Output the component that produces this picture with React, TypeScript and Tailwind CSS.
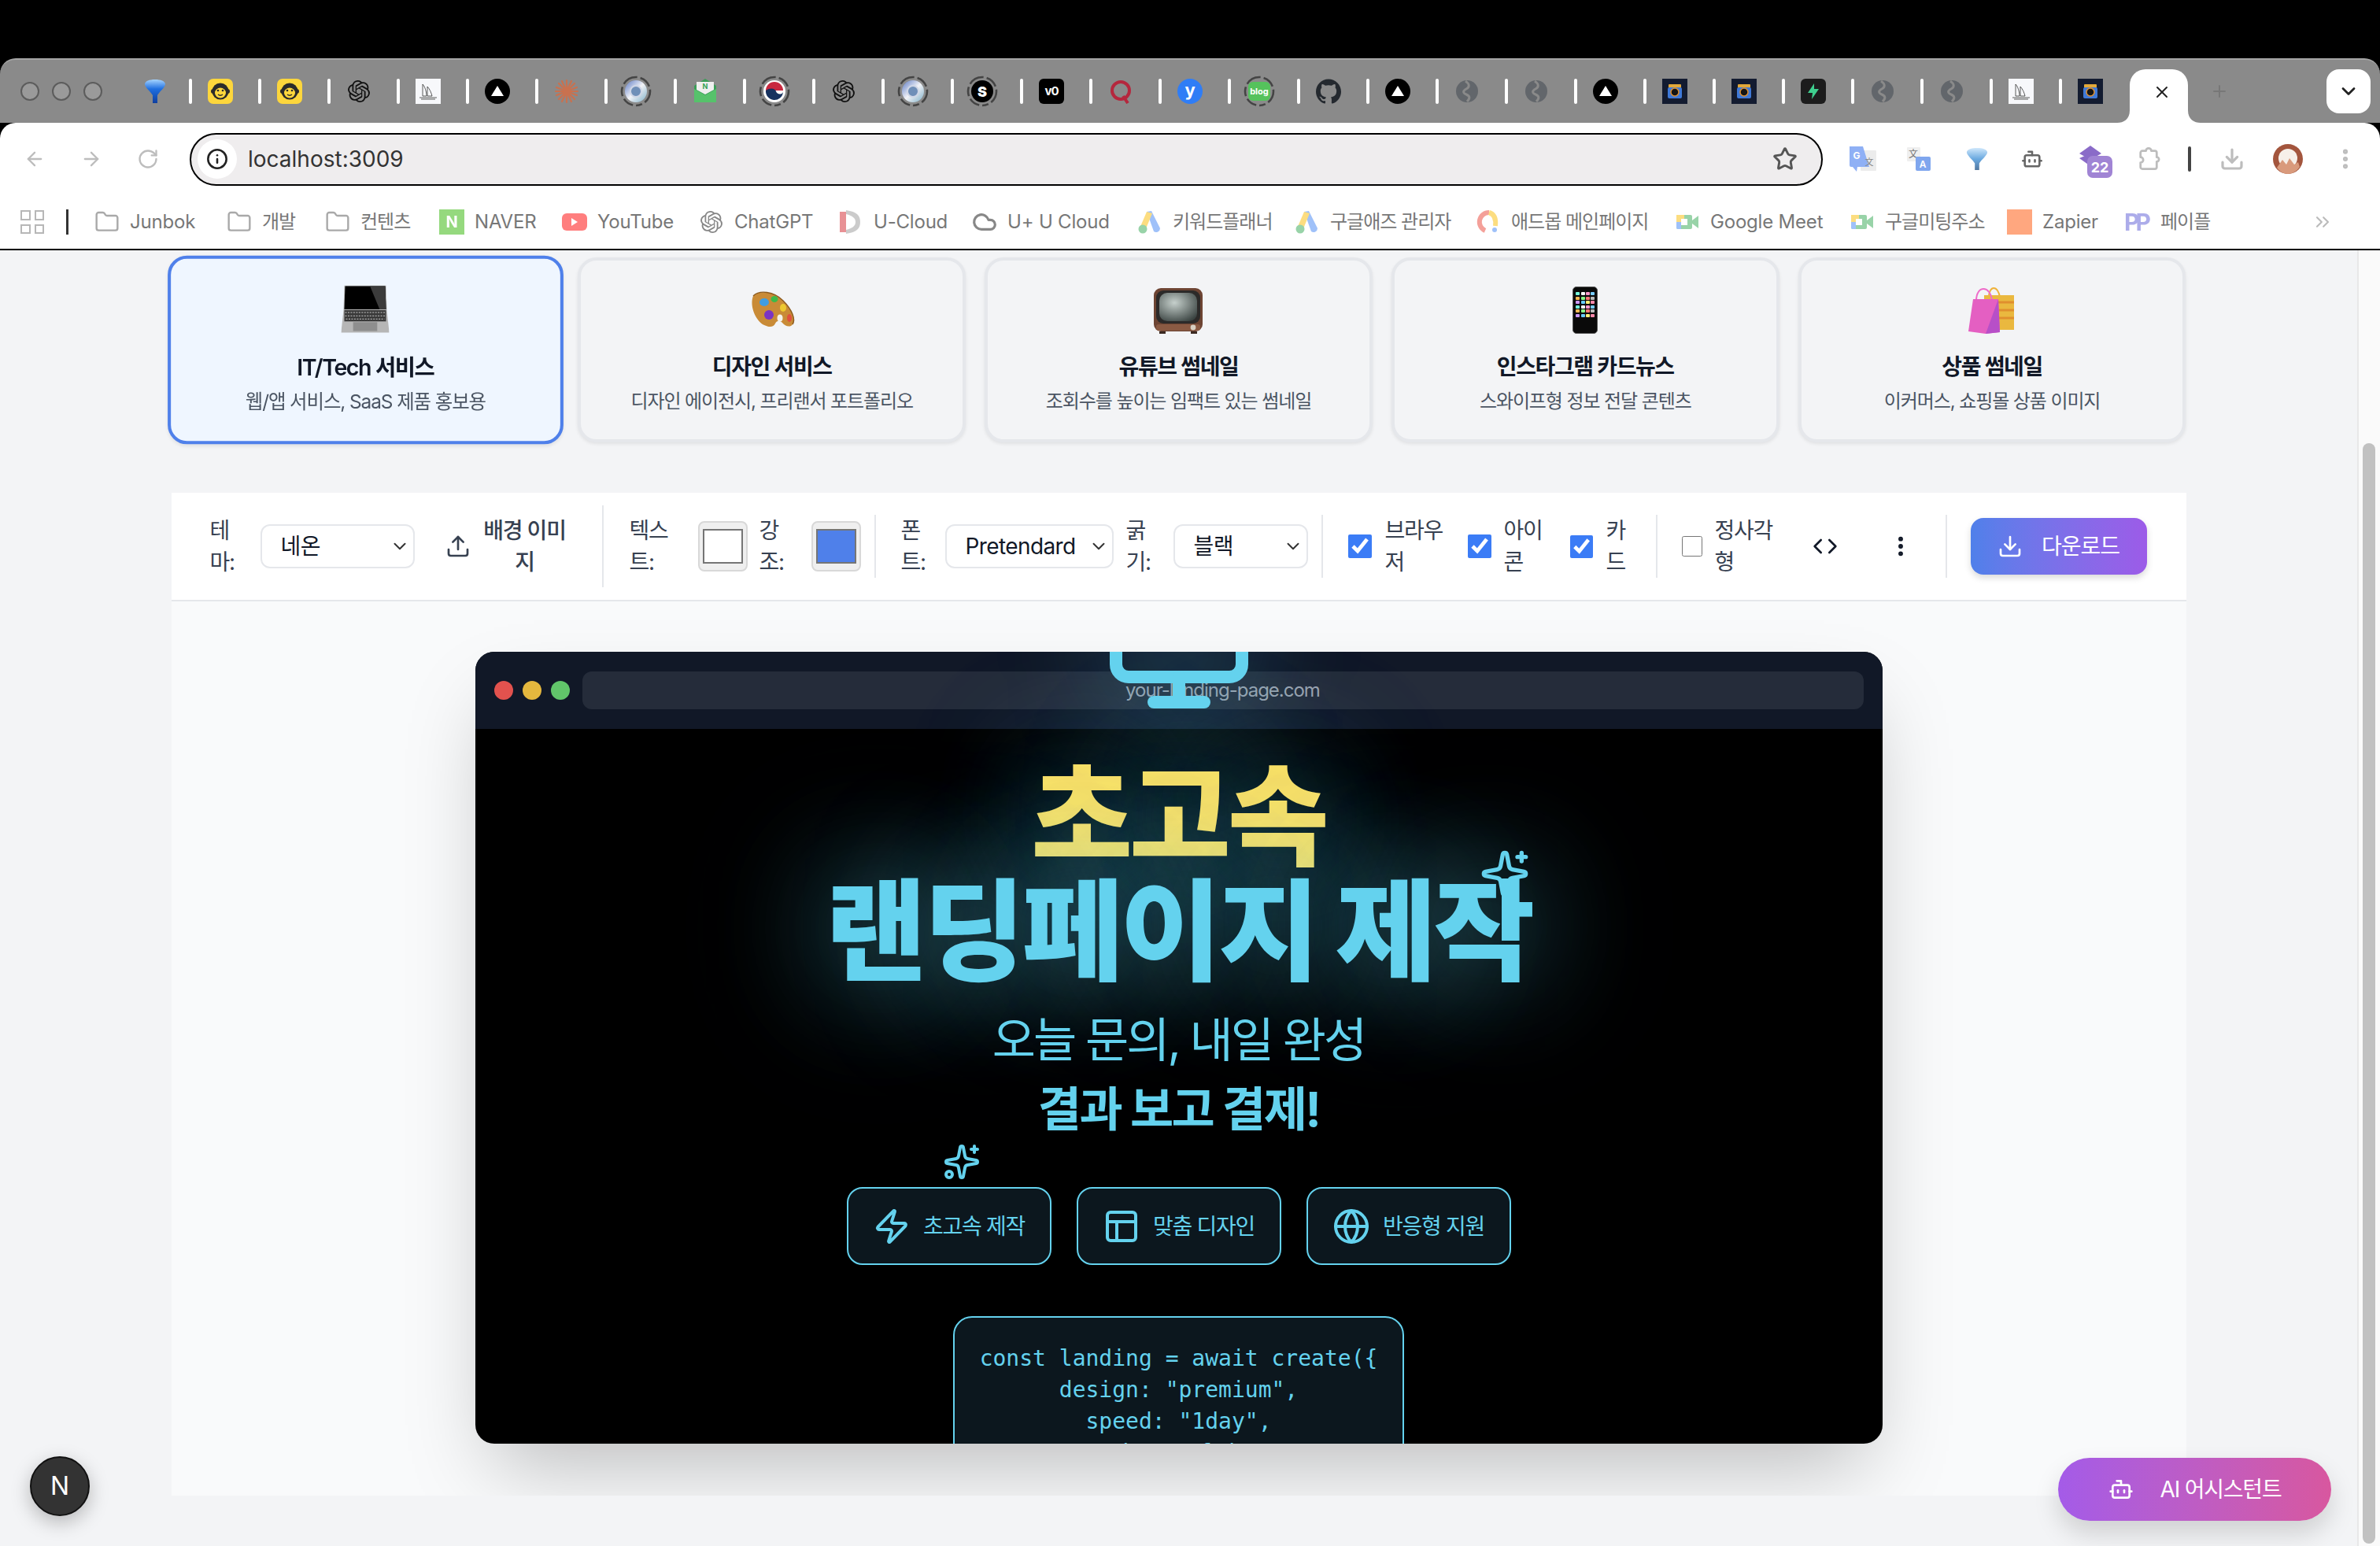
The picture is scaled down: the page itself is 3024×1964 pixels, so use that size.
import {
  ArrowLeft,
  ArrowRight,
  Bot,
  ChevronDown,
  ChevronsRight,
  Cloud,
  Code,
  Download,
  EllipsisVertical,
  Folder,
  Globe,
  Info,
  Monitor,
  PanelsTopLeft,
  Plus,
  RotateCw,
  Sparkles,
  Star,
  Upload,
  X,
  Zap,
} from 'lucide-react';
import { SiGithub, SiOpenai } from 'react-icons/si';

type FavKind =
  | 'funnel' | 'monkey' | 'openai' | 'sail' | 'triangle' | 'burst' | 'ringC' | 'mailN'
  | 'ringKr' | 'ringS' | 'v0' | 'q' | 'y' | 'blog' | 'github' | 'globe' | 'camera' | 'bolt';

const tabs: FavKind[] = [
  'monkey', 'monkey', 'openai', 'sail', 'triangle', 'burst', 'ringC', 'mailN', 'ringKr', 'openai',
  'ringC', 'ringS', 'v0', 'q', 'y', 'blog', 'github', 'triangle', 'globe', 'globe', 'triangle',
  'camera', 'camera', 'bolt', 'globe', 'globe', 'sail', 'camera',
];

function Ring({ children }: { children: React.ReactNode }) {
  return (
    <div className="relative w-8 h-8 flex items-center justify-center">
      <svg viewBox="0 0 40 40" className="absolute -inset-[4px] w-10 h-10">
        <circle cx="20" cy="20" r="18" fill="none" stroke="#444" strokeWidth="2.6" strokeDasharray="16 4 8 4 14 4 12 4 20 4" />
      </svg>
      {children}
    </div>
  );
}

function Favicon({ kind }: { kind: FavKind }) {
  switch (kind) {
    case 'funnel':
      return (
        <svg viewBox="0 0 32 32" className="w-8 h-8">
          <defs>
            <linearGradient id="fn" x1="0" y1="0" x2="0" y2="1">
              <stop offset="0" stopColor="#a5d4ff" />
              <stop offset="0.4" stopColor="#1f6fe0" />
              <stop offset="1" stopColor="#0f3f9f" />
            </linearGradient>
          </defs>
          <path d="M3 7c0-4 6-6 13-6s13 2 13 6c0 4-8 10-10 14v10h-6V21C11 17 3 11 3 7z" fill="url(#fn)" />
        </svg>
      );
    case 'monkey':
      return (
        <div className="w-8 h-8 rounded-[7px] bg-[#fdd63c] flex items-center justify-center">
          <svg viewBox="0 0 32 32" className="w-8 h-8">
            <circle cx="7" cy="16" r="3" fill="#2b2b2b" />
            <circle cx="25" cy="16" r="3" fill="#2b2b2b" />
            <circle cx="16" cy="16" r="10.5" fill="#2b2b2b" />
            <ellipse cx="16" cy="18" rx="7" ry="6.5" fill="#fdd63c" />
            <circle cx="13" cy="15" r="1.3" fill="#2b2b2b" />
            <circle cx="19" cy="15" r="1.3" fill="#2b2b2b" />
            <path d="M13 20c2 1.6 4 1.6 6 0" stroke="#2b2b2b" strokeWidth="1.4" fill="none" />
          </svg>
        </div>
      );
    case 'openai':
      return <SiOpenai className="w-[28px] h-[28px] mx-[2px] text-[#111]" />;
    case 'sail':
      return (
        <div className="w-8 h-8 bg-[#f7f8fb] flex items-center justify-center">
          <svg viewBox="0 0 32 32" className="w-8 h-8" fill="none" stroke="#333" strokeWidth="0.8">
            <path d="M9 7c3 3 5 10 5 15H9zM15 10c3 3 5 8 6 12h-6z" />
            <path d="M5 24h22M7 26h18" />
          </svg>
        </div>
      );
    case 'triangle':
      return (
        <div className="w-8 h-8 rounded-full bg-black flex items-center justify-center">
          <svg viewBox="0 0 32 32" className="w-8 h-8"><path d="M16 9l8 13H8z" fill="#fff" /></svg>
        </div>
      );
    case 'burst':
      return (
        <svg viewBox="0 0 32 32" className="w-8 h-8" stroke="#c9714f" strokeWidth="2.2" strokeLinecap="round">
          <path d="M16 2v28M2 16h28M6 6l20 20M26 6L6 26M10 3l12 26M22 3L10 29M3 11l26 10M29 11L3 21" />
        </svg>
      );
    case 'ringC':
      return (
        <Ring>
          <div className="w-7 h-7 rounded-full bg-gradient-to-br from-[#5f79c0] via-[#f2f3f7] to-[#7fb0c8] flex items-center justify-center">
            <div className="w-4 h-4 rounded-full bg-[#6f8fb8] border-2 border-[#cfd6e6]" />
          </div>
        </Ring>
      );
    case 'mailN':
      return (
        <svg viewBox="0 0 32 32" className="w-8 h-8">
          <path d="M16 0L2 9v20h28V9z" fill="#3c9d58" />
          <path d="M5 4h22v10l-11 6-11-6z" fill="#efefef" />
          <path d="M2 13l14 8 14-8v17H2z" fill="#56c26b" />
          <text x="16" y="13" textAnchor="middle" fontSize="9" fontWeight="700" fill="#35a356">N</text>
        </svg>
      );
    case 'ringKr':
      return (
        <Ring>
          <svg viewBox="0 0 28 28" className="w-7 h-7">
            <circle cx="14" cy="14" r="14" fill="#fff" />
            <path d="M3 13a11 11 0 0 1 22 0z" fill="#c8283f" />
            <path d="M3 13a11 11 0 0 0 22 2c-2 4-8 3-9-1s-8-5-13-1z" fill="#17325f" />
          </svg>
        </Ring>
      );
    case 'ringS':
      return (
        <Ring>
          <div className="w-7 h-7 rounded-full bg-black flex items-center justify-center text-white text-[18px] font-black">S</div>
        </Ring>
      );
    case 'v0':
      return <div className="w-8 h-8 rounded-[6px] bg-black text-white text-[15px] font-bold flex items-center justify-center tracking-[-1px]">v0</div>;
    case 'q':
      return (
        <svg viewBox="0 0 32 32" className="w-8 h-8" fill="none" stroke="#b5273d" strokeWidth="4">
          <circle cx="16" cy="15" r="11" />
          <path d="M19 22l6 9" />
        </svg>
      );
    case 'y':
      return <div className="w-8 h-8 rounded-full bg-[#2f7df6] text-white text-[22px] font-bold flex items-center justify-center leading-none pb-[4px]">y</div>;
    case 'blog':
      return (
        <Ring>
          <div className="w-7 h-6 rounded-[6px] bg-[#55c25c] text-white text-[11px] font-bold flex items-center justify-center">blog</div>
        </Ring>
      );
    case 'github':
      return <SiGithub className="w-8 h-8 text-[#24292f]" />;
    case 'globe':
      return (
        <svg viewBox="0 0 32 32" className="w-8 h-8">
          <circle cx="16" cy="16" r="14" fill="#62666b" />
          <path d="M14 3c6 4 5 8 1 10s-5 5 0 7 5 5 1 9" fill="none" stroke="#8a8a8a" strokeWidth="3" />
        </svg>
      );
    case 'camera':
      return (
        <svg viewBox="0 0 32 32" className="w-8 h-8">
          <rect width="32" height="32" fill="#131b30" />
          <rect x="8" y="7" width="16" height="5" rx="1" fill="#e2a83a" />
          <rect x="7" y="11" width="18" height="14" rx="2" fill="#3f79d8" />
          <circle cx="16" cy="17" r="5" fill="#141414" stroke="#e0902f" strokeWidth="1.5" />
        </svg>
      );
    case 'bolt':
      return (
        <div className="w-8 h-8 rounded-[6px] bg-[#1c1c1c] flex items-center justify-center">
          <svg viewBox="0 0 24 24" className="w-6 h-6"><path d="M13 2L5 14h6l-1 8 9-13h-6z" fill="#3ecf8e" /></svg>
        </div>
      );
  }
}

function TranslateG() {
  return (
    <svg viewBox="0 0 34 34" className="w-[34px] h-[34px]">
      <rect x="14" y="6" width="20" height="26" rx="1" fill="#ececec" />
      <path d="M0 1h17l8 26H10l-1 6-5-6H2a2 2 0 0 1-2-2z" fill="#8fb0f5" />
      <text x="9" y="17" textAnchor="middle" fontSize="12" fontWeight="700" fill="#fff">G</text>
      <text x="25" y="25" textAnchor="middle" fontSize="11" fill="#888">文</text>
    </svg>
  );
}

function TranslateA() {
  return (
    <svg viewBox="0 0 30 30" className="w-[30px] h-[30px]">
      <rect x="0" y="0" width="17" height="18" rx="1" fill="#efefef" />
      <text x="8" y="13" textAnchor="middle" fontSize="12" fill="#777">文</text>
      <rect x="11" y="12" width="19" height="18" rx="2" fill="#7fa6ee" />
      <text x="20" y="26" textAnchor="middle" fontSize="12" fontWeight="600" fill="#fff">A</text>
    </svg>
  );
}

function FunnelExt() {
  return (
    <svg viewBox="0 0 30 32" className="w-[28px] h-[32px]">
      <defs>
        <linearGradient id="fn2" x1="0" y1="0" x2="0" y2="1">
          <stop offset="0" stopColor="#cfe7fb" />
          <stop offset="0.5" stopColor="#6aa9e0" />
          <stop offset="1" stopColor="#52779f" />
        </linearGradient>
      </defs>
      <path d="M1 7c0-4 6-6 14-6s14 2 14 6c0 4-8 10-11 15v9h-6v-9C9 17 1 11 1 7z" fill="url(#fn2)" />
    </svg>
  );
}

function Stack22() {
  return (
    <div className="relative w-[40px] h-[40px]">
      <svg viewBox="0 0 32 32" className="w-8 h-8">
        <path d="M16 3l14 10-14 8L2 13z" fill="#8a6bc8" />
        <path d="M2 19l14-6 14 6-14 10z" fill="#8a6bc8" />
      </svg>
      <div className="absolute left-[12px] top-[16px] w-[32px] h-[28px] rounded-[7px] bg-[#a084d4] text-white text-[18px] font-bold flex items-center justify-center">22</div>
    </div>
  );
}

function PuzzleExt() {
  return (
    <svg viewBox="0 0 28 28" className="w-8 h-8" fill="none" stroke="#bdbdbd" strokeWidth="2.4" strokeLinejoin="round">
      <path d="M7 5h4a3 3 0 0 1 6 0h4a2 2 0 0 1 2 2v5a2.5 2.5 0 0 1 0 5v6a2 2 0 0 1-2 2H7a2 2 0 0 1-2-2v-5a3 3 0 0 0 0-6V7a2 2 0 0 1 2-2z" />
    </svg>
  );
}

function Avatar() {
  return (
    <svg viewBox="0 0 38 38" className="w-[38px] h-[38px]">
      <circle cx="19" cy="19" r="19" fill="#a3553d" />
      <circle cx="19" cy="18" r="12" fill="#f6efe9" />
      <path d="M5 30l7-10 5 6 4-8 6 8 5-3 2 6c-4 6-10 9-15 9S8 35 5 30z" fill="#d99a7c" />
    </svg>
  );
}

function Bookmark({ width, icon, label }: { width: string; icon: React.ReactNode; label: string }) {
  const spacing = /[가-힣]/.test(label) ? 'tracking-[-1px]' : 'tracking-[-0.2px]';
  return (
    <div className={`${width} shrink-0 flex items-center gap-[13px]`}>
      <div className="w-8 h-8 shrink-0 flex items-center justify-center opacity-50">{icon}</div>
      <span className={`text-[24px] text-[#777] whitespace-nowrap ${spacing}`}>{label}</span>
    </div>
  );
}

function AdsIcon() {
  return (
    <svg viewBox="0 0 32 32" className="w-8 h-8">
      <path d="M12 3l6-1 11 22a5 5 0 0 1-8 4z" fill="#4285f4" />
      <path d="M12 3l7 2-9 22-7-3z" fill="#fbbc04" />
      <circle cx="7" cy="25" r="5.5" fill="#34a853" />
    </svg>
  );
}

function MeetIcon() {
  return (
    <svg viewBox="0 0 32 32" className="w-8 h-8">
      <rect x="2" y="7" width="20" height="18" rx="2" fill="#34a853" />
      <path d="M2 7h10v9H2z" fill="#fbbc04" />
      <path d="M2 16h6v9H4a2 2 0 0 1-2-2z" fill="#4285f4" />
      <rect x="8" y="12" width="8" height="8" fill="#fff" />
      <path d="M22 14l8-6v16l-8-6z" fill="#34a853" />
    </svg>
  );
}

function LaptopEmoji() {
  return (
    <svg viewBox="0 0 60 60" className="w-[60px] h-[60px]">
      <path d="M4 0h52l1 31H3z" fill="#b9b9b9" />
      <path d="M5 1h50l1 29H4z" fill="#000" />
      <path d="M36 1h19l1 29h-8z" fill="#3b3b3b" />
      <path d="M3 31h54l3 28H0z" fill="#b6b6b6" />
      <rect x="4" y="31" width="52" height="14" fill="#3a3a3a" />
      <path d="M5 34h50M5 38h50M6 42h48" stroke="#c8c8c8" strokeWidth="1" strokeDasharray="2 1.4" />
      <rect x="15" y="46" width="30" height="11" fill="#8e8e8e" />
    </svg>
  );
}

function PaletteEmoji() {
  return (
    <svg viewBox="0 0 60 60" className="w-[60px] h-[60px]">
      <path d="M6 12C14 4 32 6 44 18s16 24 12 30c-3 5-10 2-13-2-3-3-7-3-9 1-2 5-8 5-14 2C9 44 1 24 6 12z" fill="#c98b37" />
      <path d="M6 12c8-8 26-6 38 6S60 42 56 48" fill="none" stroke="#8c5a1e" strokeWidth="1.4" />
      <ellipse cx="20" cy="20" rx="6" ry="5" fill="#3f9de0" />
      <ellipse cx="33" cy="16" rx="4.5" ry="4" fill="#3cba4a" />
      <ellipse cx="44" cy="27" rx="4" ry="5" fill="#edc82f" />
      <ellipse cx="52" cy="40" rx="3" ry="5" fill="#e0503f" />
      <ellipse cx="26" cy="36" rx="6" ry="6" fill="#7b34c4" />
      <ellipse cx="40" cy="40" rx="3.5" ry="4.5" fill="#f4f2ea" />
    </svg>
  );
}

function TvEmoji() {
  return (
    <svg viewBox="0 0 64 60" className="w-[64px] h-[60px]">
      <defs>
        <radialGradient id="tvScreen" cx="0.4" cy="0.35" r="0.75">
          <stop offset="0" stopColor="#c6d0cc" />
          <stop offset="1" stopColor="#3b4442" />
        </radialGradient>
      </defs>
      <rect x="1" y="2" width="62" height="55" rx="9" fill="#6d4433" />
      <rect x="4" y="5" width="56" height="42" rx="9" fill="#2c2a29" />
      <rect x="8" y="8" width="48" height="36" rx="10" fill="url(#tvScreen)" />
      <rect x="4" y="48" width="56" height="8" rx="3" fill="#8a5a43" />
      <circle cx="51" cy="52" r="3.4" fill="#d8cfc2" />
      <rect x="8" y="57" width="8" height="3" fill="#3b2a22" />
      <rect x="48" y="57" width="8" height="3" fill="#3b2a22" />
    </svg>
  );
}

const phoneDots = ['#7fd', '#fff', '#f9c', '#7cf', '#fb5', '#8f8', '#f77', '#bbb', '#c9f', '#6cf', '#fe7', '#f8a'];

function PhoneEmoji() {
  return (
    <div className="w-[32px] h-[60px] rounded-[5px] bg-[#0a0a0a] border-[1px] border-[#555] grid grid-cols-4 gap-[1.5px] px-[3px] py-[6px] content-start">
      {Array.from({ length: 24 }).map((_, i) => (
        <div key={i} className="h-[4px] rounded-[1px]" style={{ background: phoneDots[i % phoneDots.length] }} />
      ))}
    </div>
  );
}

function BagsEmoji() {
  return (
    <svg viewBox="0 0 60 60" className="w-[60px] h-[60px]">
      <path d="M26 14c0-16 12-16 14 0" fill="none" stroke="#efb23b" strokeWidth="2" />
      <rect x="20" y="11" width="38" height="44" fill="#eab83f" />
      <path d="M34 20h24M34 30h24M34 40h24" stroke="#e08f2e" strokeWidth="3" />
      <path d="M10 18c0-20 18-20 20 0" fill="none" stroke="#ee6bc9" strokeWidth="2" />
      <path d="M6 16h32l2 42-18 2-22-3z" fill="#e45fc2" />
      <path d="M38 16l2 42-18 2z" fill="#b74fc8" />
    </svg>
  );
}

const cards = [
  { title: 'IT/Tech 서비스', sub: '웹/앱 서비스, SaaS 제품 홍보용', icon: <LaptopEmoji />, active: true },
  { title: '디자인 서비스', sub: '디자인 에이전시, 프리랜서 포트폴리오', icon: <PaletteEmoji /> },
  { title: '유튜브 썸네일', sub: '조회수를 높이는 임팩트 있는 썸네일', icon: <TvEmoji /> },
  { title: '인스타그램 카드뉴스', sub: '스와이프형 정보 전달 콘텐츠', icon: <PhoneEmoji /> },
  { title: '상품 썸네일', sub: '이커머스, 쇼핑몰 상품 이미지', icon: <BagsEmoji /> },
];

function Select({ width, value }: { width: string; value: string }) {
  return (
    <div className={`${width} h-[56px] shrink-0 rounded-[12px] border-2 border-[#e5e7eb] bg-white flex items-center justify-between pl-[24px] pr-[4px] text-[28px] tracking-[-0.6px] text-[#111827]`}>
      <span className="whitespace-nowrap">{value}</span>
      <ChevronDown className="w-[26px] h-[26px] text-[#333]" strokeWidth={1.8} />
    </div>
  );
}

function Label({ first, second, className }: { first: string; second: string; className: string }) {
  return (
    <div className={`${className} shrink-0 text-[28px] leading-[40px] tracking-[-1.2px] text-[#374151] whitespace-nowrap`}>
      {first}
      <br />
      {second}
    </div>
  );
}

function Swatch({ colorClass }: { colorClass: string }) {
  return (
    <div className="w-[63px] h-[64px] shrink-0 rounded-[8px] bg-[#efefef] border-2 border-[#d8d8d8] px-[4px] py-[8px]">
      <div className={`w-full h-full border-2 border-[#757575] ${colorClass}`} />
    </div>
  );
}

function Divider({ tall }: { tall?: boolean }) {
  return <div className={`w-[2px] shrink-0 bg-[#e5e7eb] ${tall ? 'h-[104px]' : 'h-[80px]'}`} />;
}

function Chip({ icon, label }: { icon: React.ReactNode; label: string }) {
  return (
    <div className="w-[260px] h-[99px] rounded-[20px] border-2 border-[#64d2ee] bg-[#0c171e] flex items-center justify-center gap-4 text-[#64d2ee] text-[28px] tracking-[-1.3px]">
      {icon}
      <span className="whitespace-nowrap">{label}</span>
    </div>
  );
}

export default function App() {
  return (
    <div className="relative w-[3024px] h-[1964px] overflow-hidden bg-black flex flex-col [font-family:Inter,'Noto_Sans_CJK_KR',sans-serif]">
      <div className="h-[74px] shrink-0 bg-black" />

      {/* Tab strip */}
      <div className="h-[82px] shrink-0 bg-[#8a8a8a] rounded-t-[20px] border-t-2 border-[#a5a5a5] flex items-center pr-[12px]">
        <div className="pl-[26px] flex gap-4">
          <div className="w-6 h-6 rounded-full border-2 border-[#5c5c5c] bg-[#9a9a9a]" />
          <div className="w-6 h-6 rounded-full border-2 border-[#5c5c5c] bg-[#9a9a9a]" />
          <div className="w-6 h-6 rounded-full border-2 border-[#5c5c5c] bg-[#9a9a9a]" />
        </div>
        <div className="ml-[51px] mr-[27px]">
          <Favicon kind="funnel" />
        </div>
        {tabs.map((kind, i) => (
          <div key={i} className="w-[88px] shrink-0 flex items-center">
            <div className="w-[4px] h-[32px] rounded-full bg-white" />
            <div className="ml-[20px]">
              <Favicon kind={kind} />
            </div>
          </div>
        ))}
        <div className="ml-[2px] self-end relative w-[74px] h-[68px] rounded-t-[20px] bg-white flex items-center justify-center pl-[8px] pb-[10px]">
          <X className="w-6 h-6 text-[#222]" strokeWidth={2} />
          <svg viewBox="0 0 16 16" className="absolute -left-[16px] bottom-0 w-4 h-4"><path d="M16 0v16H0c8 0 16-4 16-16z" fill="#fff" /></svg>
          <svg viewBox="0 0 16 16" className="absolute -right-[16px] bottom-0 w-4 h-4"><path d="M0 0v16h16C8 16 0 12 0 0z" fill="#fff" /></svg>
        </div>
        <Plus className="ml-[28px] w-6 h-6 text-[#777]" strokeWidth={2} />
        <div className="ml-auto w-[56px] h-[56px] rounded-[16px] bg-white flex items-center justify-center">
          <ChevronDown className="w-7 h-7 text-[#222]" strokeWidth={2.4} />
        </div>
      </div>

      {/* Address bar */}
      <div className="h-[94px] shrink-0 bg-white rounded-t-[20px] flex items-center pl-[30px] pb-[2px] text-[#bdbdbd]">
        <ArrowLeft className="w-[28px] h-[28px]" strokeWidth={2} />
        <ArrowRight className="ml-[44px] w-[28px] h-[28px]" strokeWidth={2} />
        <RotateCw className="ml-[44px] w-[28px] h-[28px]" strokeWidth={2} />
        <div className="ml-[39px] w-[2075px] h-[67px] shrink-0 rounded-full border-2 border-black bg-[#efedee] flex items-center pl-[8px] pr-[30px]">
          <div className="w-[50px] h-[50px] rounded-full bg-white flex items-center justify-center">
            <Info className="w-[28px] h-[28px] text-[#222]" strokeWidth={2.2} />
          </div>
          <span className="ml-[14px] text-[28px] text-[#333]">localhost:3009</span>
          <Star className="ml-auto w-8 h-8 text-[#555]" strokeWidth={2.2} />
        </div>
        <div className="ml-[34px]"><TranslateG /></div>
        <div className="ml-[39px]"><TranslateA /></div>
        <div className="ml-[45px]"><FunnelExt /></div>
        <Bot className="ml-[42px] w-[28px] h-[28px] text-[#666]" strokeWidth={2.2} />
        <div className="ml-[44px]"><Stack22 /></div>
        <div className="ml-[34px]"><PuzzleExt /></div>
        <div className="ml-[34px] w-[4px] h-[32px] rounded-full bg-[#444]" />
        <Download className="ml-[36px] w-8 h-8 text-[#bdbdbd]" strokeWidth={2.4} />
        <div className="ml-[36px]"><Avatar /></div>
        <EllipsisVertical className="ml-[38px] w-8 h-8 text-[#bdbdbd]" strokeWidth={2.6} />
      </div>

      {/* Bookmarks */}
      <div className="h-[68px] shrink-0 bg-white border-b-[2px] border-black flex items-center pl-[26px] pb-[2px]">
        <div className="w-[30px] h-[30px] shrink-0 grid grid-cols-2 gap-[5px] opacity-60">
          <div className="border-2 border-[#888]" />
          <div className="border-2 border-[#888]" />
          <div className="border-2 border-[#888]" />
          <div className="border-2 border-[#888]" />
        </div>
        <div className="ml-[28px] mr-[33px] w-[3px] h-[32px] bg-[#333]" />
        <Bookmark width="w-[168px]" label="Junbok" icon={<Folder className="w-8 h-8 text-[#555]" strokeWidth={1.8} />} />
        <Bookmark width="w-[125px]" label="개발" icon={<Folder className="w-8 h-8 text-[#555]" strokeWidth={1.8} />} />
        <Bookmark width="w-[145px]" label="컨텐츠" icon={<Folder className="w-8 h-8 text-[#555]" strokeWidth={1.8} />} />
        <Bookmark width="w-[156px]" label="NAVER" icon={<div className="w-8 h-8 bg-[#2db400] text-white text-[20px] font-bold flex items-center justify-center">N</div>} />
        <Bookmark width="w-[174px]" label="YouTube" icon={<div className="w-8 h-[22px] rounded-[6px] bg-[#f00] flex items-center justify-center"><div className="border-y-[5px] border-y-transparent border-l-[8px] border-l-white" /></div>} />
        <Bookmark width="w-[177px]" label="ChatGPT" icon={<SiOpenai className="w-[28px] h-[28px] text-[#111]" />} />
        <Bookmark width="w-[170px]" label="U-Cloud" icon={<svg viewBox="0 0 32 32" className="w-8 h-8"><rect x="2" y="3" width="8" height="26" fill="#d3262e" /><path d="M10 1c14 2 18 7 18 15s-4 13-18 15v-5c8-2 12-5 12-10S18 8 10 6z" fill="#999" /></svg>} />
        <Bookmark width="w-[210px]" label="U+ U Cloud" icon={<Cloud className="w-8 h-8 text-[#111]" strokeWidth={2.4} />} />
        <Bookmark width="w-[200px]" label="키워드플래너" icon={<AdsIcon />} />
        <Bookmark width="w-[230px]" label="구글애즈 관리자" icon={<AdsIcon />} />
        <Bookmark width="w-[253px]" label="애드몹 메인페이지" icon={<svg viewBox="0 0 32 32" className="w-8 h-8" fill="none" strokeWidth="6"><path d="M17 4A12 12 0 0 0 12 27" stroke="#ea4335" /><path d="M17 4c7 2 9 8 8 17" stroke="#fbbc04" /><circle cx="24" cy="26" r="3" fill="#4285f4" stroke="none" /></svg>} />
        <Bookmark width="w-[222px]" label="Google Meet" icon={<MeetIcon />} />
        <Bookmark width="w-[200px]" label="구글미팅주소" icon={<MeetIcon />} />
        <Bookmark width="w-[150px]" label="Zapier" icon={<div className="w-8 h-8 bg-[#ff4f00]" />} />
        <Bookmark width="w-[90px]" label="페이플" icon={<div className="text-[30px] font-bold text-[#5b5bd6] tracking-[-5px] pr-[5px]">PP</div>} />
        <ChevronsRight className="ml-[147px] w-7 h-7 text-[#bbb]" strokeWidth={1.8} />
      </div>

      {/* Page */}
      <div className="flex-1 min-h-0 flex bg-[#f3f4f6]">
        <div className="w-[2995px] shrink-0 overflow-hidden">
          <div className="w-[2560px] mx-auto pt-[9px]">
            <div className="grid grid-cols-5 gap-6">
              {cards.map((card) => (
                <div
                  key={card.title}
                  className={
                    card.active
                      ? 'h-[235px] rounded-[24px] border-[4px] border-[#4f80ea] bg-[#eff6ff] scale-[1.02] flex flex-col items-center pt-[33px] shadow-[0_2px_4px_rgba(0,0,0,0.08)]'
                      : 'h-[235px] rounded-[24px] border-[4px] border-[#e5e7eb] bg-[#f3f4f6] flex flex-col items-center pt-[33px] shadow-[0_2px_4px_rgba(0,0,0,0.08)]'
                  }
                >
                  <div className="h-[60px] flex items-center justify-center">{card.icon}</div>
                  <div className="mt-[22px] text-[28px] leading-[40px] font-semibold tracking-[-1.4px] text-[#111827] whitespace-nowrap">{card.title}</div>
                  <div className="mt-[8px] text-[24px] leading-[32px] tracking-[-1.1px] text-[#4b5563] whitespace-nowrap">{card.sub}</div>
                </div>
              ))}
            </div>

            <div className="mt-[64px] bg-white">
              {/* Controls */}
              <div className="h-[138px] border-b-2 border-[#e5e7eb] flex items-center pl-[49px]">
                <Label className="w-[64px]" first="테" second="마:" />
                <Select width="w-[196px]" value="네온" />
                <Upload className="ml-[39px] w-8 h-8 shrink-0 text-[#374151]" strokeWidth={2} />
                <div className="ml-[15px] w-[108px] shrink-0 text-center text-[28px] leading-[40px] font-medium tracking-[-1.2px] text-[#374151] whitespace-nowrap">
                  배경 이미
                  <br />
                  지
                </div>
                <div className="ml-[44px]"><Divider tall /></div>
                <Label className="ml-[33px] w-[87px]" first="텍스" second="트:" />
                <Swatch colorClass="bg-white" />
                <Label className="ml-[15px] w-[66px]" first="강" second="조:" />
                <Swatch colorClass="bg-[#4f80ea]" />
                <div className="ml-[17px]"><Divider /></div>
                <Label className="ml-[32px] w-[56px]" first="폰" second="트:" />
                <Select width="w-[214px]" value="Pretendard" />
                <Label className="ml-[16px] w-[60px]" first="굵" second="기:" />
                <Select width="w-[171px]" value="블랙" />
                <div className="ml-[17px]"><Divider /></div>
                <input type="checkbox" defaultChecked className="ml-[32px] w-[30px] h-[30px] shrink-0 accent-[#3b7cf6]" />
                <Label className="ml-[17px] w-[72px]" first="브라우" second="저" />
                <input type="checkbox" defaultChecked className="ml-[33px] w-[30px] h-[30px] shrink-0 accent-[#3b7cf6]" />
                <Label className="ml-[16px] w-[54px]" first="아이" second="콘" />
                <input type="checkbox" defaultChecked className="ml-[30px] w-[29px] h-[29px] shrink-0 accent-[#3b7cf6]" />
                <Label className="ml-[17px] w-[24px]" first="카" second="드" />
                <div className="ml-[39px]"><Divider /></div>
                <input type="checkbox" className="ml-[31px] w-[26px] h-[26px] shrink-0" />
                <Label className="ml-[16px] w-[74px]" first="정사각" second="형" />
                <Code className="ml-[50px] w-8 h-8 shrink-0 text-[#111827]" strokeWidth={2} />
                <EllipsisVertical className="ml-[64px] w-8 h-8 shrink-0 text-[#111827]" strokeWidth={2.4} />
                <div className="ml-[41px]"><Divider /></div>
                <div className="ml-[30px] w-[224px] h-[72px] shrink-0 rounded-[16px] bg-gradient-to-r from-[#4f80ea] to-[#9c5be8] shadow-[0_4px_8px_rgba(0,0,0,0.15)] flex items-center justify-center gap-6 text-white text-[28px] tracking-[-1px]">
                  <Download className="w-8 h-8" strokeWidth={2} />
                  <span>다운로드</span>
                </div>
              </div>

              {/* Preview */}
              <div className="h-[1136px] bg-[#f9fafb] overflow-hidden pt-[64px]">
                <div className="relative mx-auto w-[1788px] h-[1006px] rounded-[24px] overflow-hidden bg-black flex flex-col shadow-[0_50px_100px_-24px_rgba(0,0,0,0.25)]">
                  <div className="h-[98px] shrink-0 bg-[#111827] flex items-center gap-3 px-6">
                    <div className="w-6 h-6 rounded-full bg-[#e2524e]" />
                    <div className="w-6 h-6 rounded-full bg-[#e4b73e]" />
                    <div className="w-6 h-6 rounded-full bg-[#61c56a]" />
                    <div className="ml-1 flex-1 h-12 rounded-[12px] bg-[#252c3a] flex items-center justify-center text-[24px] tracking-[-1px] text-[#9ca3af]">
                      your-landing-page.com
                    </div>
                  </div>

                  <div className="flex-1 min-h-0 flex flex-col items-center pt-[38px]">
                    <h1 className="text-center text-[140px] leading-[146px] font-black tracking-[-4px] text-[#64d2ee] [text-shadow:0_0_150px_rgba(100,210,238,0.6),0_0_220px_rgba(100,210,238,0.3)]">
                      <span className="text-[#fbe166]">초고속</span>
                      <br />
                      랜딩페이지 제작
                    </h1>
                    <p className="mt-[29px] text-[60px] leading-[72px] font-normal tracking-[-3px] text-[#64d2ee]">오늘 문의, 내일 완성</p>
                    <p className="mt-[16px] text-[60px] leading-[72px] font-bold tracking-[-2.5px] text-[#64d2ee]">결과 보고 결제!</p>
                    <div className="mt-[63px] flex gap-8">
                      <Chip icon={<Zap className="w-12 h-12" strokeWidth={2} />} label="초고속 제작" />
                      <Chip icon={<PanelsTopLeft className="w-12 h-12" strokeWidth={2} />} label="맞춤 디자인" />
                      <Chip icon={<Globe className="w-12 h-12" strokeWidth={2} />} label="반응형 지원" />
                    </div>
                    <div className="mt-[65px] w-[573px] shrink-0 rounded-[24px] border-2 border-[#64d2ee] bg-[#0c171e] pt-[32px] pb-[32px] text-center text-[28px] leading-[40px] text-[#64d2ee] [font-family:'DejaVu_Sans_Mono',monospace]">
                      const landing = await create({'{'}
                      <br />
                      design: "premium",
                      <br />
                      speed: "1day",
                      <br />
                      price: "fair"
                    </div>
                  </div>

                  {/* decorations floating over the slide */}
                  <Monitor className="absolute left-[798px] -top-[104px] w-[192px] h-[192px] text-[#64d2ee] drop-shadow-[0_0_60px_rgba(100,210,238,0.6)]" strokeWidth={2} />
                  <Sparkles className="absolute left-[1276px] top-[250px] w-16 h-16 text-[#64d2ee]" strokeWidth={2} />
                  <Sparkles className="absolute left-[594px] top-[624px] w-12 h-12 text-[#64d2ee]" strokeWidth={2} />
                </div>
              </div>
            </div>
          </div>
        </div>

        {/* Scrollbar */}
        <div className="flex-1 bg-[#fafafa] border-l-2 border-[#e8e8e8] pl-[5px] pt-[245px]">
          <div className="w-4 h-[1398px] rounded-full bg-[#c1c1c1]" />
        </div>
      </div>

      {/* Floating buttons */}
      <div className="absolute left-[38px] top-[1850px] w-[76px] h-[76px] rounded-full bg-[#333] border-2 border-[#111] shadow-[0_8px_24px_rgba(0,0,0,0.25)] flex items-center justify-center text-white text-[32px] font-normal">
        N
      </div>
      <div className="absolute left-[2615px] top-[1852px] w-[347px] h-[80px] rounded-full bg-gradient-to-r from-[#a45be8] to-[#d8579f] shadow-[0_16px_32px_rgba(0,0,0,0.15)] flex items-center justify-center gap-[34px] text-white text-[28px] tracking-[-1.2px]">
        <Bot className="w-8 h-8" strokeWidth={2} />
        <span>AI 어시스턴트</span>
      </div>
    </div>
  );
}
